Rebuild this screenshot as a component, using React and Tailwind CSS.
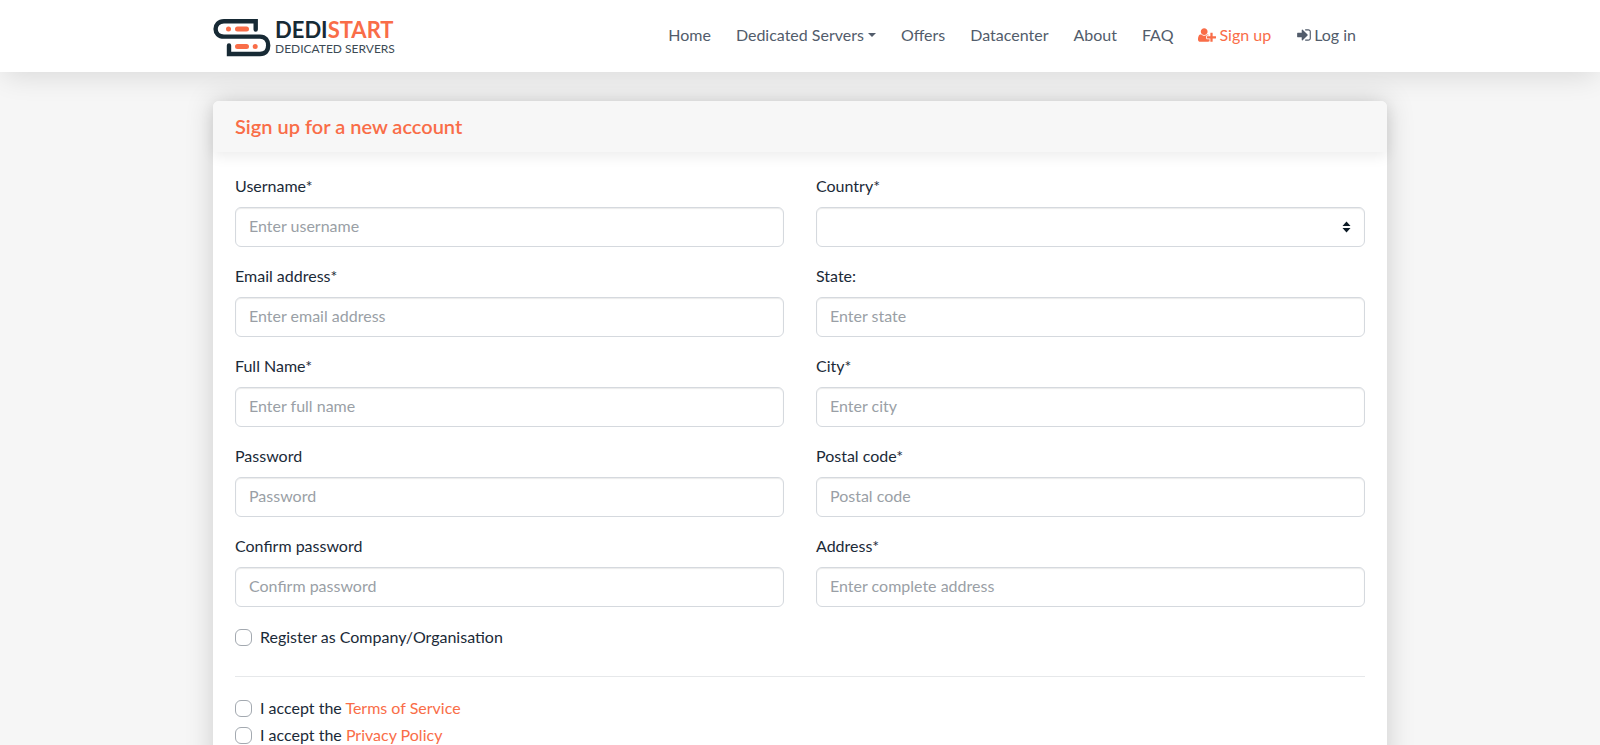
import { useState } from "react";

const leftFields = [
    { id: "username", label: "Username*", placeholder: "Enter username" },
    { id: "email", label: "Email address*", placeholder: "Enter email address", type: "email" },
    { id: "fullname", label: "Full Name*", placeholder: "Enter full name" },
    { id: "password", label: "Password", placeholder: "Password", type: "password" },
    { id: "confirm", label: "Confirm password", placeholder: "Confirm password", type: "password" },
];

const rightFields = [
    { id: "country", label: "Country*", select: true },
    { id: "state", label: "State:", placeholder: "Enter state" },
    { id: "city", label: "City*", placeholder: "Enter city" },
    { id: "postal", label: "Postal code*", placeholder: "Postal code" },
    { id: "address", label: "Address*", placeholder: "Enter complete address" },
];

const controlClass =
    "block h-10 w-full rounded-md border border-[#d5d9de] bg-white px-[13px] pb-1 text-[#1b2a38] placeholder:text-[#9a9fa6] shadow-[inset_0_1px_1px_rgba(0,0,0,0.08)] outline-none focus:border-[#f96d48]";

const Logo = () => (
    <a href="#" className="flex items-center gap-1">
        <svg className="mt-1 h-10 w-[58px]" viewBox="0 0 58 40" fill="none" strokeLinecap="round">
            <g stroke="#172a35" strokeWidth="4.4">
                <path d="M42.7 11.5V3.3H11C5.5 3.3 2.6 6.8 2.6 11S5.5 18.6 11 18.6H47C52.5 18.6 55.2 22.6 55.2 27.6S52.5 36 47 36H16V27.5" />
            </g>
            <g stroke="#f96d48" strokeWidth="5">
                <path d="M15.5 11h.01M24.5 11h9M24.5 28.5h9M42.2 28.5h.01" />
            </g>
        </svg>
        <span className="flex flex-col whitespace-nowrap">
            <span className="text-[22px] leading-[25px] font-bold text-[#172a35]">
                DEDI<span className="text-[#f96d48]">START</span>
            </span>
            <span className="text-[12px] leading-[14px] text-[#3c4a54]">DEDICATED SERVERS</span>
        </span>
    </a>
);

const UserPlusIcon = () => (
    <svg className="h-4 w-[18px]" viewBox="0 0 2048 1792" fill="currentColor">
        <path d="M704 896q-159 0-271.5-112.5t-112.5-271.5 112.5-271.5 271.5-112.5 271.5 112.5 112.5 271.5-112.5 271.5-271.5 112.5zm960 128h352q13 0 22.5 9.5t9.5 22.5v192q0 13-9.5 22.5t-22.5 9.5h-352v352q0 13-9.5 22.5t-22.5 9.5h-192q-13 0-22.5-9.5t-9.5-22.5v-352h-352q-13 0-22.5-9.5t-9.5-22.5v-192q0-13 9.5-22.5t22.5-9.5h352v-352q0-13 9.5-22.5t22.5-9.5h192q13 0 22.5 9.5t9.5 22.5v352zm-736 224q0 52 38 90t90 38h256v238q-68 50-171 50h-874q-121 0-194-69t-73-190q0-53 3.5-103.5t14-109 26.5-108.5 43-97.5 62-81 85.5-53.5 111.5-20q19 0 39 17 79 61 154.5 91.5t164.5 30.5 164.5-30.5 154.5-91.5q20-17 39-17 132 0 217 96h-223q-52 0-90 38t-38 90v192z" />
    </svg>
);

const SignInIcon = () => (
    <svg className="h-4 w-4" viewBox="0 0 1792 1792" fill="currentColor">
        <path d="M1312 896q0 26-19 45l-544 544q-19 19-45 19t-45-19-19-45v-288h-448q-26 0-45-19t-19-45v-384q0-26 19-45t45-19h448v-288q0-26 19-45t45-19 45 19l544 544q19 19 19 45zm352-352v704q0 119-84.5 203.5t-203.5 84.5h-320q-13 0-22.5-9.5t-9.5-22.5q0-4-1-20t-.5-26.5 3-23.5 10-19.5 20.5-6.5h320q66 0 113-47t47-113v-704q0-66-47-113t-113-47h-312l-11.5-1-11.5-3-8-5.5-7-9-2-13.5q0-4-1-20t-.5-26.5 3-23.5 10-19.5 20.5-6.5h320q119 0 203.5 84.5t84.5 203.5z" />
    </svg>
);

const Navbar = () => (
    <header className="relative z-10 bg-white shadow-[0_8px_28px_-4px_rgba(0,0,0,0.12)]">
        <div className="mx-auto flex min-h-[72px] max-w-[1174px] flex-wrap items-center justify-between">
            <Logo />
            <nav className="flex flex-wrap items-center gap-[25px] pr-[31px] pb-[2px] text-[#525c6b]">
                <a href="#">Home</a>
                <button type="button" className="flex items-center gap-1">
                    Dedicated Servers
                    <svg className="h-1 w-2" viewBox="0 0 8 4" fill="currentColor">
                        <path d="M0 0h8L4 4z" />
                    </svg>
                </button>
                <a href="#">Offers</a>
                <a href="#">Datacenter</a>
                <a href="#">About</a>
                <a href="#">FAQ</a>
                <a href="#" className="flex items-center gap-[3px] text-[#f96d48]">
                    <UserPlusIcon />
                    Sign up
                </a>
                <a href="#" className="flex items-center gap-[2px]">
                    <SignInIcon />
                    Log in
                </a>
            </nav>
        </div>
    </header>
);

const Field = ({ id, label, placeholder, type = "text", select }) => (
    <div className="mb-4">
        <label htmlFor={id} className="mb-2 block">
            {label}
        </label>
        {select ? (
            <div className="relative">
                <select id={id} className={`${controlClass} appearance-none`} defaultValue="">
                    <option value=""></option>
                </select>
                <svg className="pointer-events-none absolute top-[14px] right-[14px] h-3 w-[9px]" viewBox="0 0 9 12" fill="#0d1b26">
                    <path d="M4.5 0.5L8.5 5h-8zM4.5 11.5L8.5 7h-8z" />
                </svg>
            </div>
        ) : (
            <input id={id} type={type} placeholder={placeholder} className={controlClass} />
        )}
    </div>
);

const Checkbox = ({ id, checked, onChange, children }) => (
    <div className="flex items-center gap-2">
        <input
            id={id}
            type="checkbox"
            checked={checked}
            onChange={onChange}
            className="h-[17px] w-[17px] appearance-none rounded-md border border-[#a3a9b0] bg-white checked:border-[#f96d48] checked:bg-[#f96d48]"
        />
        <label htmlFor={id}>{children}</label>
    </div>
);

const App = () => {
    const [checks, setChecks] = useState({ company: false, terms: false, privacy: false });

    const toggle = (key) => setChecks({ ...checks, [key]: !checks[key] });

    return (
        <div className="min-h-screen bg-[#f6f6f6] font-[Lato,sans-serif] text-[16px] leading-[26px] text-[#1b2a38]">
            <Navbar />

            <main className="mx-auto max-w-[1174px] pt-[29px] pb-12">
                <form className="rounded-md bg-white shadow-[0_0_28px_rgba(0,0,0,0.17)]">
                    <div className="rounded-t-md bg-[#f7f7f7] px-[22px] py-3 shadow-[0_4px_14px_rgba(0,0,0,0.08)]">
                        <h1 className="text-[20px] leading-[27px] font-semibold text-[#f96d48]">Sign up for a new account</h1>
                    </div>

                    <div className="px-[22px] pt-[21px] pb-6">
                        <div className="mb-px grid grid-cols-1 gap-x-8 md:grid-cols-2">
                            <div>
                                {leftFields.map((field) => (
                                    <Field key={field.id} {...field} />
                                ))}
                            </div>
                            <div>
                                {rightFields.map((field) => (
                                    <Field key={field.id} {...field} />
                                ))}
                            </div>
                        </div>

                        <Checkbox id="company" checked={checks.company} onChange={() => toggle("company")}>
                            Register as Company/Organisation
                        </Checkbox>

                        <hr className="mt-[26px] mb-[18px] border-[#e6e8ea]" />

                        <div className="flex flex-col gap-px">
                            <Checkbox id="terms" checked={checks.terms} onChange={() => toggle("terms")}>
                                I accept the <a href="#" className="text-[#f96d48]">Terms of Service</a>
                            </Checkbox>
                            <Checkbox id="privacy" checked={checks.privacy} onChange={() => toggle("privacy")}>
                                I accept the <a href="#" className="text-[#f96d48]">Privacy Policy</a>
                            </Checkbox>
                        </div>
                    </div>
                </form>
            </main>
        </div>
    );
};

export default App;
